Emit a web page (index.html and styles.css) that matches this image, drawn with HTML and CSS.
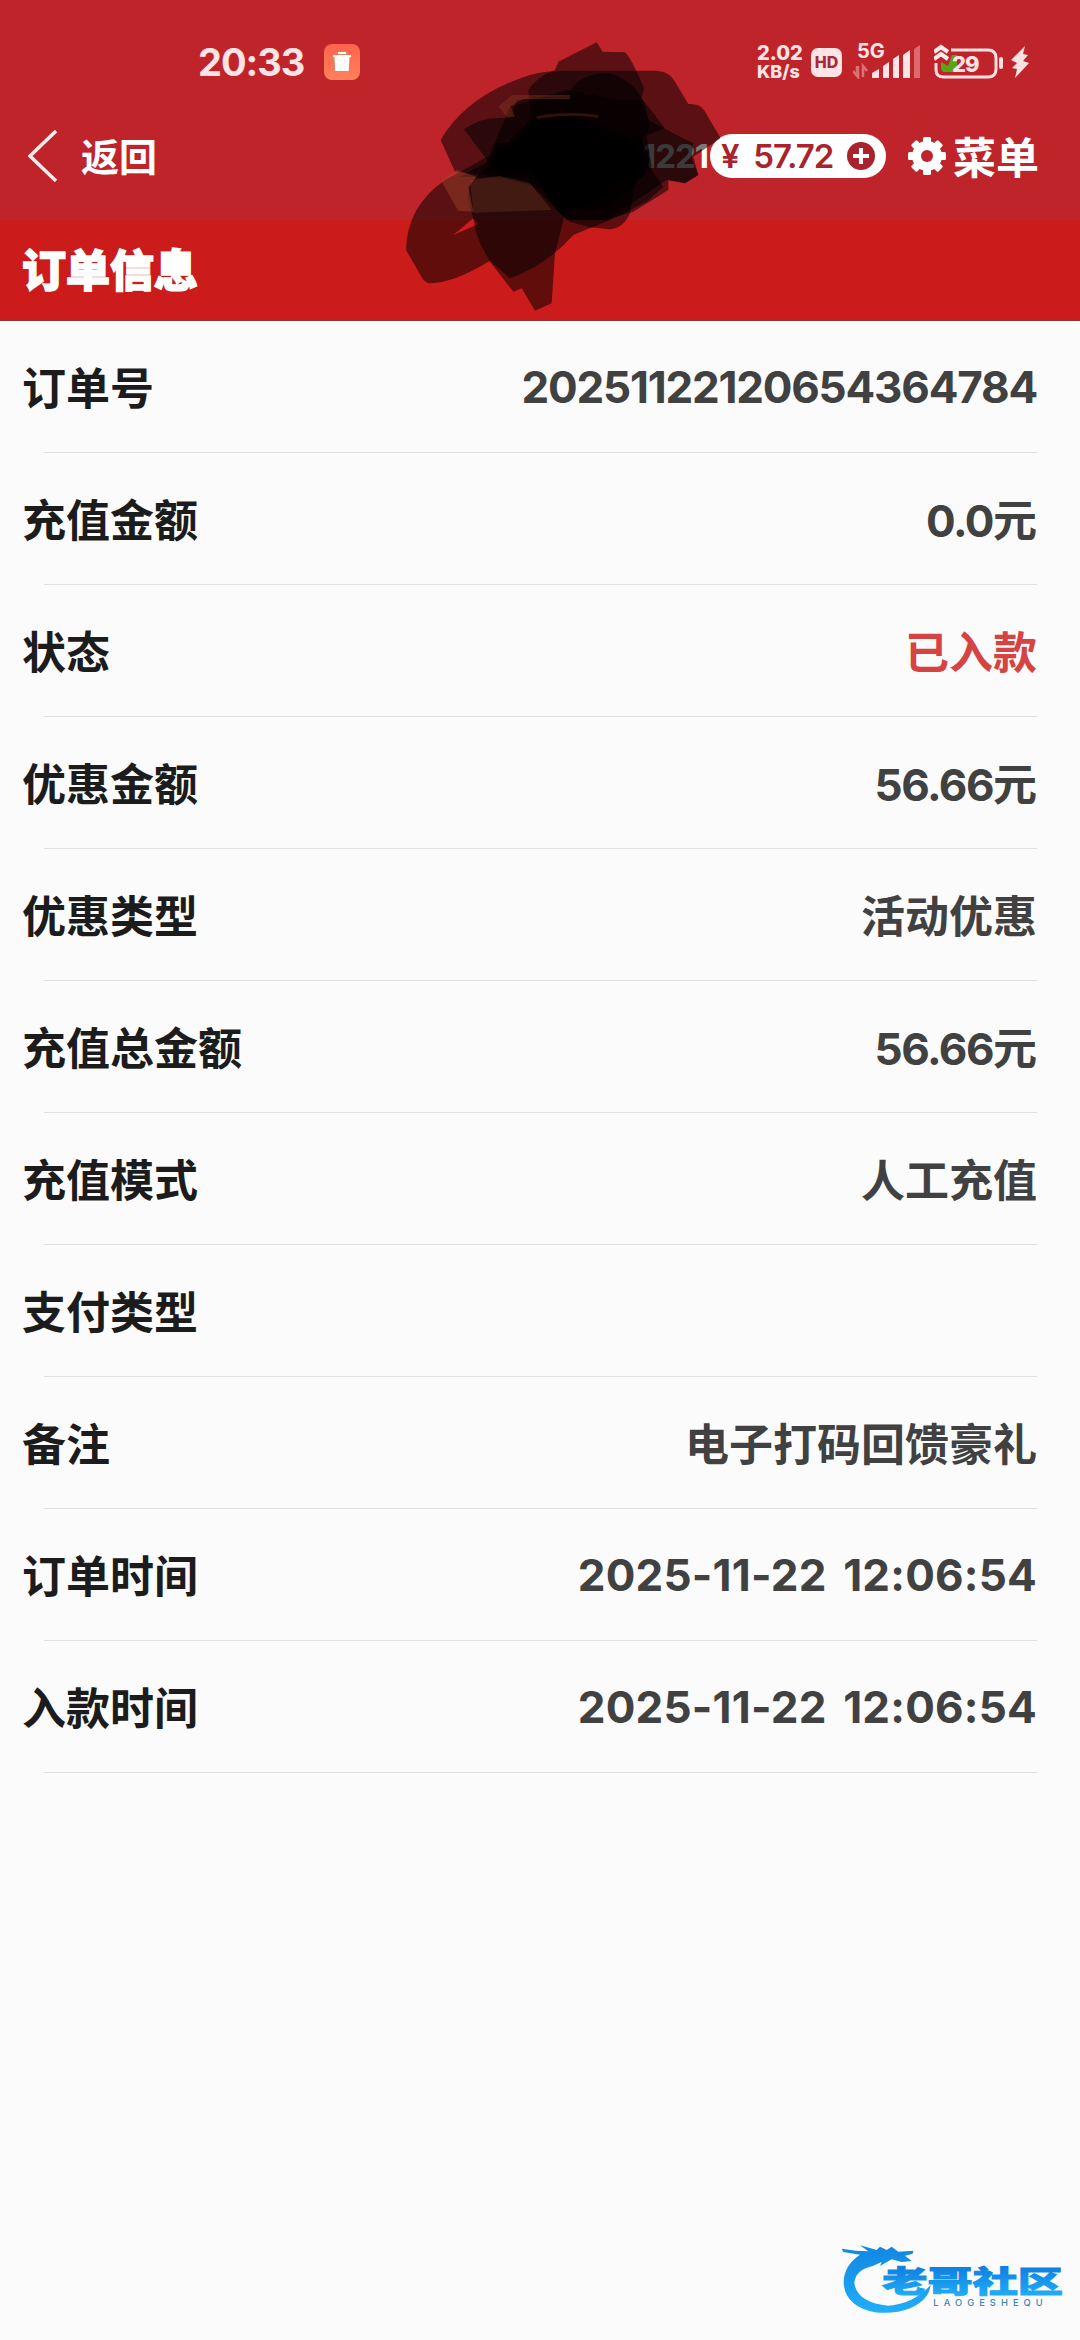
FILE: index.html
```html
<!DOCTYPE html>
<html lang="zh-CN">
<head>
    <meta charset="UTF-8">
    <meta name="viewport" content="width=device-width, initial-scale=1.0">
    <title>订单信息</title>
    <link rel="stylesheet" href="styles.css">
</head>
<body>

<header class="top">
    <!-- Status bar -->
    <div class="status-bar">
        <span class="clock">20:33</span>
        <svg class="app-icon" viewBox="0 0 36 36">
            <defs>
                <linearGradient id="appBg" x1="0" y1="0" x2="0" y2="1">
                    <stop offset="0" stop-color="#ff624f"/>
                    <stop offset="1" stop-color="#ff8259"/>
                </linearGradient>
            </defs>
            <rect width="36" height="36" rx="8" fill="url(#appBg)"/>
            <path d="M13 8h10v3h5v3h-2v13H10V14H8v-3h5z" fill="#d48868"/>
            <path d="M14 8h8v2h-8zM9 11h18v2H9zM10.500 13h15l-.8 14h-13.400z" fill="#fff"/>
        </svg>

        <div class="status-right">
            <div class="speed"><span>2.02</span><span>KB/s</span></div>
            <span class="hd">HD</span>
            <div class="signal">
                <span class="net">5G</span>
                <svg viewBox="0 0 68 34" width="68" height="34">
                    <path d="M4 21v9M0 26l5 6V21M10 32V21l4 5" fill="none" stroke="#dd7075" stroke-width="2.500"/>
                    <path d="M19 33v-5l7-4v9zM30 33V21l6-4v16zM40 33V14l6-4v23zM50 33V10l7-5v28z" fill="#ffe3e5"/>
                    <path d="M61 33V4l6-4v33z" fill="#dc6b70"/>
                </svg>
            </div>
            <div class="battery">
                <svg viewBox="0 0 72 36" width="72" height="36">
                    <path d="M17 6h37q8 0 8 8v11q0 8-8 8H10q-8 0-8-7v-7" fill="none" stroke="#ffdfe1" stroke-width="3"/>
                    <path d="M7 18l7 4 4-11h5v17H11q-4 0-4-4z" fill="#58a618"/>
                    <path d="M0 8l7-5 7 5M0 15l7-5 7 5" fill="none" stroke="#ffe9e9" stroke-width="4"/>
                    <path d="M67 15v8" stroke="#ffdfe1" stroke-width="4" stroke-linecap="round"/>
                </svg>
                <span class="level">29</span>
            </div>
            <svg class="bolt" viewBox="0 0 18 32" width="18" height="32"><path d="M14 0L0 14l6 3-5 5 5 1-2 9 14-15-6-2 5-6-5-1z" fill="#ffe1e3"/></svg>
        </div>
    </div>

    <!-- Navigation -->
    <nav class="nav">
        <a class="back">
            <svg viewBox="0 0 30 52" width="30" height="52"><path d="M28 1L2 26l26 25" fill="none" stroke="#ffecec" stroke-width="3.500"/></svg>
            <span>返回</span>
        </a>
        <div class="nav-right">
            <span class="user">1221</span>
            <div class="balance">
                <span class="yen">¥</span>
                <span class="amount">57.72</span>
                <svg viewBox="0 0 28 28" width="28" height="28"><circle cx="14" cy="14" r="14" fill="#a9232d"/><path d="M14 6v16M6 14h16" stroke="#fff" stroke-width="4"/></svg>
            </div>
            <svg class="gear" viewBox="0 0 38 38" width="38" height="38">
                <g fill="#fff">
                    <circle cx="19" cy="19" r="15"/>
                    <rect x="15" y="0" width="8" height="38" rx="1.500"/>
                    <rect x="15" y="0" width="8" height="38" rx="1.500" transform="rotate(45 19 19)"/>
                    <rect x="15" y="0" width="8" height="38" rx="1.500" transform="rotate(90 19 19)"/>
                    <rect x="15" y="0" width="8" height="38" rx="1.500" transform="rotate(135 19 19)"/>
                </g>
                <circle cx="19" cy="19" r="6" fill="#bf242b"/>
            </svg>
            <span class="menu">菜单</span>
        </div>
    </nav>
</header>

<h1 class="title">订单信息</h1>

<!-- Marker strokes over the account name -->
<svg class="scribble" viewBox="0 0 1050 930">
    <g fill="#000" fill-opacity=".52">
        <path d="M182 360Q260 225 450 165Q490 152 560 152H830Q870 155 885 185L925 252Q960 250 972 270L1022 355L940 410L955 465L915 490L865 480V510L760 575L680 600H560L440 480L225 455Z"/>
        <path d="M445 210Q470 170 525 150L535 125L650 67L668 95L735 97Q755 115 792 205L785 235L855 325L790 350L750 580Q730 625 690 628L630 622L570 605L540 580L470 480Z"/>
        <path d="M78 690Q80 560 195 480L360 390L450 300L600 290L740 350L800 430L850 500L800 545L690 600L580 645Q500 735 390 775L330 722Q220 790 145 790L130 780ZM220 645L280 595L295 612Z" fill-rule="evenodd"/>
        <path d="M265 540Q260 490 310 450L450 320L620 360L550 600L525 700L515 850L465 872L425 805L400 815L330 725Q285 650 283 610Z"/>
        <path d="M252 328Q310 285 390 295L410 240L560 225Q600 155 690 160Q790 190 805 300L900 350L940 370L935 415L955 465L915 490L860 480L740 560L680 600L560 600L500 510L370 475L240 470L325 425Z"/>
        <path d="M390 260L560 210L720 240L780 240L810 310L800 350L815 440L740 520L660 570L560 560L460 460L360 465L320 425Z"/>
    </g>
    <g fill="#000" fill-opacity=".75">
        <path d="M430 330Q440 300 480 300L620 300L680 360L780 350L810 420L790 470L690 490L680 530L600 560L540 580L480 500L450 440L390 470L330 430L350 370L420 370Z"/>
        <path d="M450 320L590 300L690 370L660 480L560 575L480 500L440 400Z"/>
    </g>
    <path d="M195 475L230 450L290 470L265 500L280 575L235 572L182 480Z" fill="#a84a2c" fill-opacity=".42"/>
    <path d="M270 480L360 468L450 490L515 570L280 578Z" fill="#754021" fill-opacity=".32"/>
    <path d="M355 260L395 225H570V237H430L392 257L405 292L380 290Z" fill="#853620" fill-opacity=".4"/>
    <path d="M470 293Q570 275 655 290" fill="none" stroke="#632515" stroke-width="8" stroke-opacity=".45"/>
</svg>

<!-- Order details -->
<ul class="order">
    <li><span>订单号</span><b class="number">20251122120654364784</b></li>
    <li><span>充值金额</span><b><i>0.0</i>元</b></li>
    <li><span>状态</span><b class="done">已入款</b></li>
    <li><span>优惠金额</span><b><i>56.66</i>元</b></li>
    <li><span>优惠类型</span><b>活动优惠</b></li>
    <li><span>充值总金额</span><b><i>56.66</i>元</b></li>
    <li><span>充值模式</span><b>人工充值</b></li>
    <li><span>支付类型</span><b></b></li>
    <li><span>备注</span><b>电子打码回馈豪礼</b></li>
    <li><span>订单时间</span><b class="time">2025-11-22 12:06:54</b></li>
    <li><span>入款时间</span><b class="time">2025-11-22 12:06:54</b></li>
</ul>

<!-- Watermark -->
<svg class="watermark" viewBox="0 0 780 360">
    <defs>
        <linearGradient id="blue" gradientUnits="userSpaceOnUse" x1="0" y1="80" x2="0" y2="280">
            <stop offset="0" stop-color="#1287e2"/>
            <stop offset="1" stop-color="#20aefa"/>
        </linearGradient>
        <linearGradient id="blueText" x1="0" y1="0" x2="0" y2="1">
            <stop offset=".2" stop-color="#0f7fe0"/>
            <stop offset="1" stop-color="#22b4fb"/>
        </linearGradient>
    </defs>
    <path d="M65 86L108 92L145 94L120 76L170 90L180 80L200 90L215 80L235 95L280 92L278 101L255 107L275 123L245 126L215 118L180 138L185 126L158 138Q105 150 103 190Q112 248 205 257Q280 252 332 195Q327 240 270 265Q225 283 165 277Q72 258 71 185Q73 135 120 104L70 96Z" fill="url(#blue)"/>
    <g class="wm-name" fill="url(#blueText)" stroke="url(#blueText)">
        <text x="187" y="217" textLength="542" lengthAdjust="spacingAndGlyphs">老哥社区</text>
    </g>
    <text class="wm-sub" x="340" y="258" textLength="328">LAOGESHEQU</text>
</svg>

</body>
</html>
```
FILE: styles.css
```css
body {
    margin: 0;
    min-height: 2340px;
    position: relative;
    background-color: #fbfbfb;
    color: #1c1c1c;
    font-family: Inter, "Noto Sans CJK SC", sans-serif;
}

/* Header */
.top {
    height: 220px;
    background-color: #bf242b;
    color: #fff;
}

.status-bar {
    box-sizing: border-box;
    height: 92px;
    padding: 32px 51px 0 198px;
    display: flex;
    align-items: center;
    color: #ffe3e5;
}

.clock {
    width: 126px;
    font-size: 38px;
    font-weight: 700;
    letter-spacing: -1px;
}

.app-icon {
    width: 36px;
    height: 36px;
}

.status-right {
    margin-left: auto;
    display: flex;
    align-items: center;
}

.speed {
    width: 54px;
    display: flex;
    flex-direction: column;
    gap: 1px;
    font-size: 18px;
    line-height: 18px;
    font-weight: 800;
    white-space: nowrap;
}

.speed span:first-child {
    font-size: 20px;
}

.hd {
    width: 31px;
    height: 29px;
    border-radius: 7px;
    background-color: #ffe3e5;
    color: #a52a33;
    font-size: 16px;
    font-weight: 800;
    line-height: 29px;
    text-align: center;
}

.signal {
    position: relative;
    margin-left: 11px;
}

.signal svg {
    display: block;
}

.net {
    position: absolute;
    left: 4px;
    top: -4px;
    font-size: 20px;
    line-height: 20px;
    font-weight: 700;
}

.battery {
    position: relative;
    margin-left: 13px;
}

.battery svg {
    display: block;
}

.level {
    position: absolute;
    left: 18px;
    top: 8px;
    font-size: 22px;
    line-height: 24px;
    font-weight: 800;
    letter-spacing: -1px;
}

.bolt {
    margin-left: 5px;
}

/* Navigation */
.nav {
    height: 128px;
    padding: 0 41px 0 28px;
    display: flex;
    align-items: center;
    justify-content: space-between;
}

.back {
    display: flex;
    align-items: center;
    gap: 23px;
    font-size: 38px;
    font-weight: 700;
}

.back span,
.menu {
    padding-bottom: 3px;
}

.nav-right {
    display: flex;
    align-items: center;
}

.user {
    font-size: 33px;
    font-weight: 700;
    letter-spacing: -1px;
}

.balance {
    box-sizing: border-box;
    width: 176px;
    height: 44px;
    margin: 0 22px 0 2px;
    padding: 0 11px;
    border-radius: 22px;
    background-color: #fff;
    color: #a9232d;
    display: flex;
    align-items: center;
    justify-content: space-between;
    font-size: 33px;
    font-weight: 600;
}

.amount {
    letter-spacing: -1px;
}

.menu {
    margin-left: 7px;
    font-size: 43px;
    font-weight: 700;
}

.title {
    box-sizing: border-box;
    height: 101px;
    margin: 0;
    padding-left: 22px;
    border-bottom: 1px solid #8f3530;
    background-color: #cb1c1b;
    color: #fff;
    font-size: 44px;
    font-weight: 900;
    line-height: 103px;
    -webkit-text-stroke: 1.5px #fff;
}

.scribble {
    position: absolute;
    left: 380px;
    top: 20px;
    width: 350px;
    height: 310px;
}

/* Order rows */
.order {
    margin: 0;
    padding: 0 43px 0 22px;
    list-style: none;
}

.order li {
    box-sizing: border-box;
    height: 132px;
    padding-bottom: 3px;
    display: flex;
    justify-content: space-between;
    align-items: center;
    font-size: 44px;
    font-weight: 700;
    background: linear-gradient(#e1e1e1, #e1e1e1) 22px 100% / 100% 1px no-repeat;
}

.order b {
    color: #414141;
    font-weight: 700;
}

.order i {
    font-style: normal;
    letter-spacing: -1.5px;
}

.order .number,
.order .time {
    padding-top: 3px;
}

.order .number {
    letter-spacing: -1.2px;
}

.order .time {
    letter-spacing: 0.2px;
    word-spacing: 6px;
}

.order .done {
    color: #d54343;
}

/* Watermark */
.watermark {
    position: absolute;
    left: 820px;
    top: 2220px;
    width: 260px;
    height: 120px;
}

.wm-name {
    font-family: "Noto Sans CJK SC", sans-serif;
    font-size: 88px;
    font-weight: 900;
    stroke-width: 3px;
}

.wm-sub {
    fill: #3d87b5;
    font-size: 28px;
    font-weight: 500;
}
```
